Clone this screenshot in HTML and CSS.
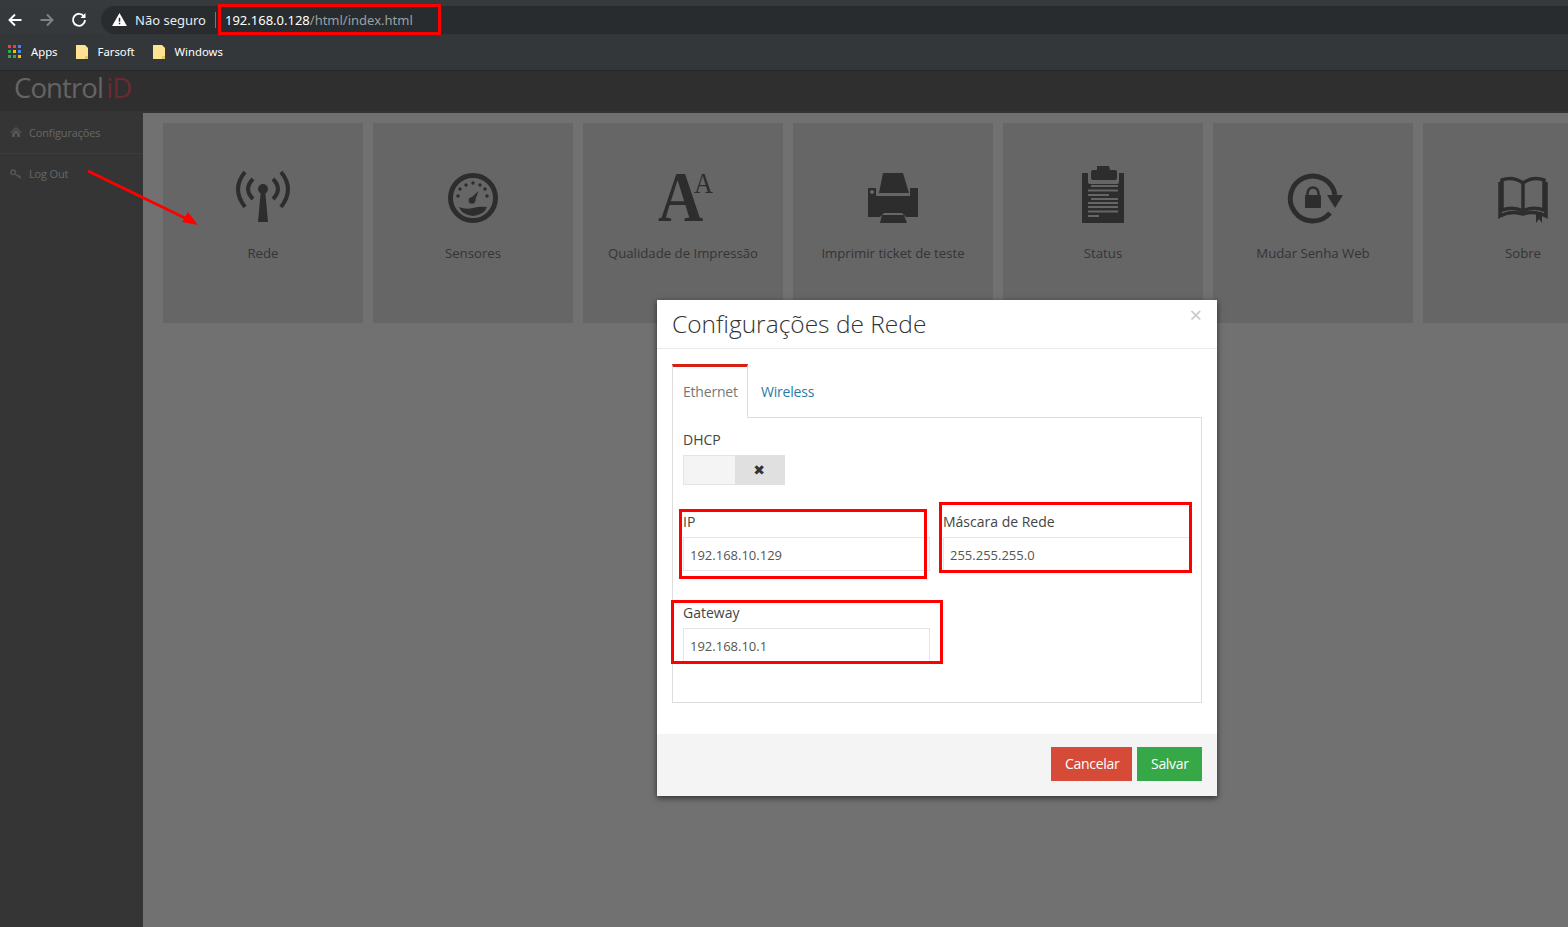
FILE: index.html
```html
<!DOCTYPE html>
<html lang="en">
<head>
    <meta charset="UTF-8">
    <meta name="viewport" content="width=device-width, initial-scale=1.0">
    <title>Control iD</title>
    <link rel="stylesheet" href="styles.css">
</head>
<body>
    <!-- browser chrome -->
    <div class="tab-strip"></div>
    <div class="toolbar">
        <div class="nav-buttons">
            <svg class="nav-icon" viewBox="0 0 16 16"><path d="M14.5 8H2.5M8 2.5 2.5 8 8 13.5" fill="none" stroke="#fff" stroke-width="1.9"/></svg>
            <svg class="nav-icon" viewBox="0 0 16 16"><path d="M1.5 8h12M8 2.5 13.500 8 8 13.500" fill="none" stroke="#7f8386" stroke-width="1.9"/></svg>
            <svg class="nav-icon" viewBox="0 0 16 16"><path d="M13 4.500A6 6 0 1 0 14 8" fill="none" stroke="#fff" stroke-width="1.900"/><path d="M14.500 1v5h-5z" fill="#fff"/></svg>
        </div>
        <div class="address">
            <svg class="warn-icon" viewBox="0 0 16 14"><path d="M8 0 16 14H0z" fill="#fff"/><path d="M7.200 5h1.600v4.500H7.200zM7.200 10.500h1.600V12H7.200z" fill="#282c2e"/></svg>
            <span class="not-secure">Não seguro</span>
            <span class="address-sep"></span>
            <span class="url"><b>192.168.0.128</b>/html/index.html</span>
        </div>
    </div>
    <div class="bookmarks">
        <div class="bookmark">
            <svg class="apps-icon" viewBox="0 0 13 13">
                <rect x="0" y="0" width="3" height="3" fill="#e8453c"/><rect x="5" y="0" width="3" height="3" fill="#e8453c"/><rect x="10" y="0" width="3" height="3" fill="#4285f4"/>
                <rect x="0" y="5" width="3" height="3" fill="#34a853"/><rect x="5" y="5" width="3" height="3" fill="#fbbc05"/><rect x="10" y="5" width="3" height="3" fill="#4285f4"/>
                <rect x="0" y="10" width="3" height="3" fill="#34a853"/><rect x="5" y="10" width="3" height="3" fill="#34a853"/><rect x="10" y="10" width="3" height="3" fill="#fbbc05"/>
            </svg>
            Apps
        </div>
        <div class="bookmark">
            <svg class="folder-icon" viewBox="0 0 12 14"><path d="M0 0h9l3 3v11H0z" fill="#fde293"/><path d="M9 11h3v3H9z" fill="#e8c860"/></svg>
            Farsoft
        </div>
        <div class="bookmark">
            <svg class="folder-icon" viewBox="0 0 12 14"><path d="M0 0h9l3 3v11H0z" fill="#fde293"/><path d="M9 11h3v3H9z" fill="#e8c860"/></svg>
            Windows
        </div>
    </div>

    <!-- app -->
    <div class="app">
        <div class="app-header">
            <span class="logo">Control <em>iD</em></span>
        </div>
        <div class="app-body">
            <div class="sidebar">
                <div class="side-item">
                    <svg class="side-icon" viewBox="0 0 12 10"><path d="M6 0 12 5.200 11.200 6 6 1.600.8 6 0 5.200zM2 6 6 2.600 10 6v4H7V7H5v3H2z" fill="#a8a8a8"/></svg>
                    Configurações
                </div>
                <div class="side-item">
                    <svg class="side-icon" viewBox="0 0 12 10"><circle cx="3.200" cy="3.200" r="2.300" fill="none" stroke="#a8a8a8" stroke-width="1.500"/><path d="M5 5 11 9.500M8 7.200 9.500 6M9.500 8.400 10.800 7.200" fill="none" stroke="#a8a8a8" stroke-width="1.300"/></svg>
                    Log Out
                </div>
            </div>
            <div class="content">
                <div class="card">
                    <svg class="card-icon" viewBox="0 0 60 60">
                        <circle cx="30" cy="24" r="5"/>
                        <path d="M28 24h4l3 33H25z"/>
                        <path class="line" d="M20 14Q10 24 20 34M40 14Q50 24 40 34M12 7Q-2 24 12 42M48 7Q62 24 48 42"/>
                    </svg>
                    <span class="card-label">Rede</span>
                </div>
                <div class="card">
                    <svg class="card-icon" viewBox="0 0 60 60">
                        <circle class="line ring" cx="30" cy="33" r="22.500"/>
                        <g>
                            <circle cx="15" cy="31" r="1.700"/><circle cx="17" cy="24" r="1.700"/><circle cx="23" cy="20" r="1.700"/><circle cx="30" cy="18" r="1.700"/><circle cx="37" cy="20" r="1.700"/><circle cx="42" cy="24" r="1.700"/><circle cx="44" cy="31" r="1.700"/>
                        </g>
                        <circle cx="29" cy="35.500" r="3.300"/>
                        <path d="M35.500 26 31.500 37 26.800 34z"/>
                        <path d="M16 42Q23 45 30 43Q37 41 44 42Q41 50 30 51Q19 50 16 42z"/>
                    </svg>
                    <span class="card-label">Sensores</span>
                </div>
                <div class="card">
                    <svg class="card-icon" viewBox="0 0 60 60">
                        <text class="font-a" transform="scale(.87 1)"><tspan x="5.700" y="56">A</tspan><tspan class="font-a-small" x="47" y="28">A</tspan></text>
                    </svg>
                    <span class="card-label">Qualidade de Impressão</span>
                </div>
                <div class="card">
                    <svg class="card-icon" viewBox="0 0 60 60">
                        <path d="M20 8h20l6 20H16z"/>
                        <path fill-rule="evenodd" d="M5 23h8v8h34v-8h8v29H43l-4-4H21l-4 4H5zM9 25a2 2 0 1 0 .01 0z"/>
                        <path d="M19 50h22l3 8H17z"/>
                    </svg>
                    <span class="card-label">Imprimir ticket de teste</span>
                </div>
                <div class="card">
                    <svg class="card-icon" viewBox="0 0 60 60">
                        <path d="M9 8h42v50H9z"/>
                        <path class="cut" d="M15 8h31v9a2 2 0 0 1-2 2H17a2 2 0 0 1-2-2z"/>
                        <path d="M24 1h12l1 4h5a2 2 0 0 1 2 2v6a2 2 0 0 1-2 2H20a2 2 0 0 1-2-2V7a2 2 0 0 1 2-2h4z"/>
                        <path class="cut-line" d="M18 21h27M15 25.500h30M15 30h21M18 34h27M15 38h30M15 42h30M15 46.500h30M15 51h11"/>
                    </svg>
                    <span class="card-label">Status</span>
                </div>
                <div class="card">
                    <svg class="card-icon" viewBox="0 0 60 60">
                        <path class="line ring" d="M52 30A22.500 22.500 0 1 0 47 48"/>
                        <path d="M44 30h16l-8 13z"/>
                        <rect x="22" y="30" width="16" height="13" rx="1"/>
                        <path class="line thin" d="M24.500 31v-3a5.500 5.500 0 0 1 11 0v3"/>
                    </svg>
                    <span class="card-label">Mudar Senha Web</span>
                </div>
                <div class="card">
                    <svg class="card-icon" viewBox="0 0 60 60">
                        <path class="line book" d="M30 18Q20 11 9 15V45Q20 41 30 46Q40 41 51 45V15Q40 11 30 18V46"/>
                        <path class="line book" d="M7 17V51Q18 45 30 49Q42 45 53 51V17"/>
                        <path d="M43 47h6v11l-3-4-3 4z"/>
                    </svg>
                    <span class="card-label">Sobre</span>
                </div>
            </div>
        </div>

        <div class="backdrop"></div>

        <div class="modal">
            <div class="modal-header">
                <h3>Configurações de Rede</h3>
                <span class="modal-close">×</span>
            </div>
            <div class="modal-body">
                <div class="tabs">
                    <div class="tab active">Ethernet</div>
                    <div class="tab">Wireless</div>
                </div>
                <div class="tab-pane">
                    <label class="field-label">DHCP</label>
                    <div class="toggle">
                        <span class="toggle-off"></span>
                        <span class="toggle-x">✖</span>
                    </div>
                    <div class="field-grid">
                        <div class="field">
                            <label class="field-label">IP</label>
                            <div class="input">192.168.10.129</div>
                        </div>
                        <div class="field">
                            <label class="field-label">Máscara de Rede</label>
                            <div class="input">255.255.255.0</div>
                        </div>
                        <div class="field">
                            <label class="field-label">Gateway</label>
                            <div class="input">192.168.10.1</div>
                        </div>
                    </div>
                </div>
            </div>
            <div class="modal-footer">
                <button class="btn btn-cancel">Cancelar</button>
                <button class="btn btn-save">Salvar</button>
            </div>
        </div>
    </div>

    <!-- red marks drawn on top of the screenshot -->
    <svg class="marks" viewBox="0 0 1568 927">
        <rect x="219.500" y="5.500" width="220" height="28"/>
        <rect x="680.500" y="510.500" width="245" height="67"/>
        <rect x="940.500" y="503.500" width="250" height="68"/>
        <rect x="672.500" y="601.500" width="269" height="61"/>
        <path class="arrow-line" d="M88 171 187 219"/>
        <path class="arrow-head" d="M198 225 182 222 188 212z"/>
    </svg>
</body>
</html>
```

FILE: styles.css
```css
* {
    box-sizing: border-box;
}
body {
    font-family: "Open Sans", Arial, sans-serif;
    margin: 0;
    height: 927px;
    overflow: hidden;
    position: relative;
    background-color: #e2e2e2;
}

/* browser chrome */
.tab-strip {
    height: 6px;
    background-color: #363a3d;
}
.toolbar {
    height: 28px;
    display: flex;
    align-items: center;
    background-color: #35393c;
}
.nav-buttons {
    display: flex;
    gap: 16px;
    padding-left: 7px;
    width: 101px;
}
.nav-icon {
    width: 16px;
    height: 16px;
}
.address {
    flex-grow: 1;
    height: 28px;
    display: flex;
    align-items: center;
    padding: 0 0 1px 11px;
    background-color: #282c2e;
    border-radius: 14px 0 0 14px;
    font-family: "Noto Sans", Arial, sans-serif;
    font-size: 13px;
}
.warn-icon {
    width: 15px;
    height: 13px;
    margin-right: 8px;
}
.not-secure {
    color: #e8eaed;
}
.address-sep {
    width: 1px;
    height: 16px;
    margin: 0 9px;
    background-color: #777;
}
.url {
    color: #9aa0a6;
}
.url b {
    font-weight: normal;
    color: #fff;
}
.bookmarks {
    height: 36px;
    display: flex;
    align-items: center;
    gap: 18px;
    padding: 0 0 1px 8px;
    background-color: #33373a;
    font-family: "Noto Sans", Arial, sans-serif;
    font-size: 11.300px;
    color: #fff;
}
.bookmark {
    display: flex;
    align-items: center;
}
.apps-icon {
    width: 13px;
    height: 13px;
    margin-right: 10px;
}
.folder-icon {
    width: 12px;
    height: 14px;
    margin-right: 10px;
}

/* app */
.app {
    position: relative;
    height: 857px;
}
.app-header {
    height: 43px;
    padding: 0 0 7px 14px;
    display: flex;
    align-items: center;
    background-color: #5e5e5e;
    border-top: 1px solid #4e4e4e;
    border-bottom: 2px solid #6a6a6a;
}
.logo {
    font-size: 27.500px;
    letter-spacing: -0.900px;
    word-spacing: -3px;
    color: #c8c8c8;
}
.logo em {
    font-style: normal;
    color: #d65460;
}
.app-body {
    display: flex;
    height: 814px;
}
.sidebar {
    width: 143px;
    flex-shrink: 0;
    background-color: #6a6a6a;
}
.side-item {
    height: 41px;
    display: flex;
    align-items: center;
    padding: 0 0 2px 10px;
    border-bottom: 1px solid #787878;
    font-size: 11px;
    letter-spacing: -0.150px;
    color: #cccccc;
}
.side-item:last-child {
    border-bottom: none;
}
.side-icon {
    width: 12px;
    height: 10px;
    margin-right: 7px;
}
.content {
    flex-grow: 1;
    display: flex;
    gap: 10px;
    padding: 10px 20px;
    overflow: hidden;
}
.card {
    width: 200px;
    height: 200px;
    flex-shrink: 0;
    display: flex;
    flex-direction: column;
    align-items: center;
    padding-top: 42px;
    background-color: #cccccc;
}
.card-icon {
    width: 60px;
    height: 60px;
    overflow: visible;
    fill: #5a5a5a;
}
.card-label {
    margin-top: 18px;
    font-size: 13.200px;
    line-height: 20px;
    color: #6a6a6a;
}
.card-icon .line {
    fill: none;
    stroke: #5a5a5a;
    stroke-width: 4;
}
.card-icon .ring {
    stroke-width: 5;
}
.card-icon .thin {
    stroke-width: 2.5;
}
.card-icon .book {
    stroke-width: 3.5;
}
.card-icon .cut {
    fill: #cccccc;
}
.card-icon .cut-line {
    fill: none;
    stroke: #cccccc;
    stroke-width: 2;
}
.font-a {
    font-family: "Liberation Serif", serif;
    font-weight: bold;
    font-size: 72px;
}
.font-a-small {
    font-weight: normal;
    font-size: 30px;
}

/* modal */
.backdrop {
    position: absolute;
    top: 0;
    right: 0;
    bottom: 0;
    left: 0;
    background-color: rgba(0,0,0,0.5);
}
.modal {
    position: absolute;
    left: 657px;
    top: 230px;
    width: 560px;
    height: 496px;
    display: flex;
    flex-direction: column;
    background-color: white;
    box-shadow: 0 2px 6px rgba(0,0,0,0.6);
}
.modal-header {
    height: 49px;
    flex-shrink: 0;
    position: relative;
    padding: 7px 15px 0;
    border-bottom: 1px solid #e9e9e9;
}
.modal-header h3 {
    margin: 0;
    font-size: 24.500px;
    font-weight: 300;
    line-height: 33px;
    color: #333;
}
.modal-close {
    position: absolute;
    top: 1px;
    right: 15px;
    font-size: 22px;
    line-height: 26px;
    color: #c8c8c8;
}
.modal-body {
    flex-grow: 1;
    padding: 15px 15px 0;
}
.tabs {
    display: flex;
    height: 54px;
    margin-bottom: -1px;
    position: relative;
}
.tab {
    padding: 18px 13px 0;
    font-size: 14px;
    letter-spacing: -0.200px;
    color: #2a7ba8;
}
.tab.active {
    width: 76px;
    padding: 15px 10px 0;
    border-top: 3px solid #d62012;
    border-left: 1px solid #ddd;
    border-right: 1px solid #ddd;
    background-color: white;
    color: #777;
    z-index: 1;
}
.tab-pane {
    height: 286px;
    padding: 12px 10px 0;
    border: 1px solid #ddd;
}
.field-label {
    display: block;
    font-size: 14px;
    line-height: 20px;
    color: #444;
}
.toggle {
    display: flex;
    width: 102px;
    height: 30px;
    margin-top: 5px;
}
.toggle-off {
    width: 52px;
    background-color: #f4f4f4;
    border: 1px solid #e4e4e4;
    border-right: none;
}
.toggle-x {
    width: 50px;
    padding-right: 2px;
    text-align: center;
    font-family: "DejaVu Sans", sans-serif;
    font-size: 14px;
    line-height: 30px;
    background-color: #e0e0e0;
    color: #333;
}
.field-grid {
    display: grid;
    grid-template-columns: 247px 247px;
    column-gap: 13px;
    row-gap: 32px;
    margin-top: 27px;
}
.input {
    height: 34px;
    margin-top: 5px;
    padding-left: 6px;
    border: 1px solid #e5e5e5;
    font-size: 13px;
    line-height: 34px;
    color: #555;
}
.modal-footer {
    height: 62px;
    flex-shrink: 0;
    display: flex;
    justify-content: flex-end;
    align-items: center;
    gap: 5px;
    padding: 0 15px 2px 0;
    background-color: #f4f4f4;
}
.btn {
    height: 34px;
    padding: 0 14px 2px;
    border: none;
    font-family: "Open Sans", Arial, sans-serif;
    font-size: 14px;
    letter-spacing: -0.300px;
    color: white;
}
.btn-cancel {
    width: 81px;
    background-color: #d64b38;
}
.btn-save {
    width: 65px;
    background-color: #37a848;
}

/* annotations */
.marks {
    position: absolute;
    top: 0;
    left: 0;
    width: 1568px;
    height: 927px;
    pointer-events: none;
}
.marks rect {
    fill: none;
    stroke: #ff0000;
    stroke-width: 3;
}
.arrow-line {
    fill: none;
    stroke: #ff0000;
    stroke-width: 3;
}
.arrow-head {
    fill: #ff0000;
}
```
